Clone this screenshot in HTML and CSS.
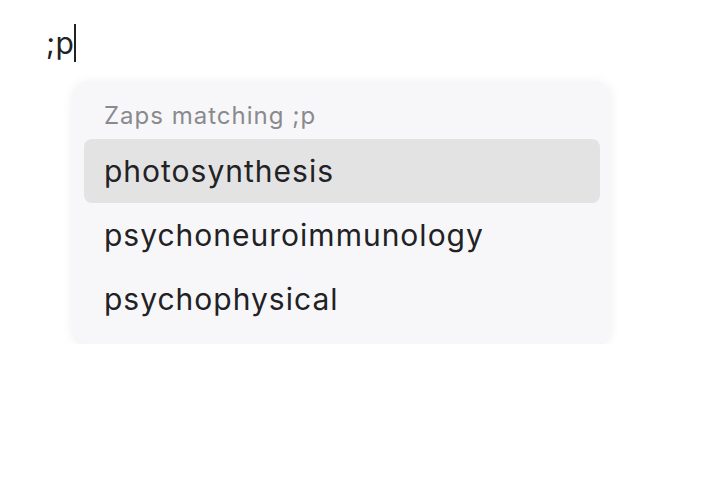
FILE: index.html
```html
<!DOCTYPE html>
<html>
<head>
<meta charset="utf-8">
<link rel="stylesheet" href="styles.css">
</head>
<body>
<div class="page">
  <div class="editor"><span class="typed">;p</span><span class="caret"></span></div>
  <div class="popup">
    <div class="header">Zaps matching ;p</div>
    <div class="item active">photosynthesis</div>
    <div class="item">psychoneuroimmunology</div>
    <div class="item">psychophysical</div>
  </div>
</div>
</body>
</html>
```
FILE: styles.css
```css
html, body {
  margin: 0;
  padding: 0;
  background: #ffffff;
}
body {
  font-family: Inter, "Noto Sans", sans-serif;
  color: #222225;
}
.page {
  padding: 24px 0 0 46px;
}
.editor {
  display: flex;
  align-items: center;
  height: 38px;
  font-size: 30px;
  letter-spacing: 0.5px;
  color: #222;
}
.caret {
  display: inline-block;
  width: 2px;
  height: 38px;
  background: #222;
}
.popup {
  margin: 19px 0 0 27px;
  width: 537px;
  box-sizing: border-box;
  padding: 16px 10px 13px 11px;
  background: #f7f7f9;
  border-radius: 15px;
  box-shadow: 0 2px 12px rgba(0, 0, 0, 0.08);
}
.header {
  font-size: 24px;
  letter-spacing: 1px;
  color: #8a8a8e;
  padding: 0 20px;
  height: 42px;
  line-height: 38px;
}
.item {
  height: 64px;
  line-height: 64px;
  padding: 0 20px;
  font-size: 30px;
  letter-spacing: 1px;
  border-radius: 8px;
  color: #222225;
}
.item.active {
  background: #e3e3e4;
}
```
